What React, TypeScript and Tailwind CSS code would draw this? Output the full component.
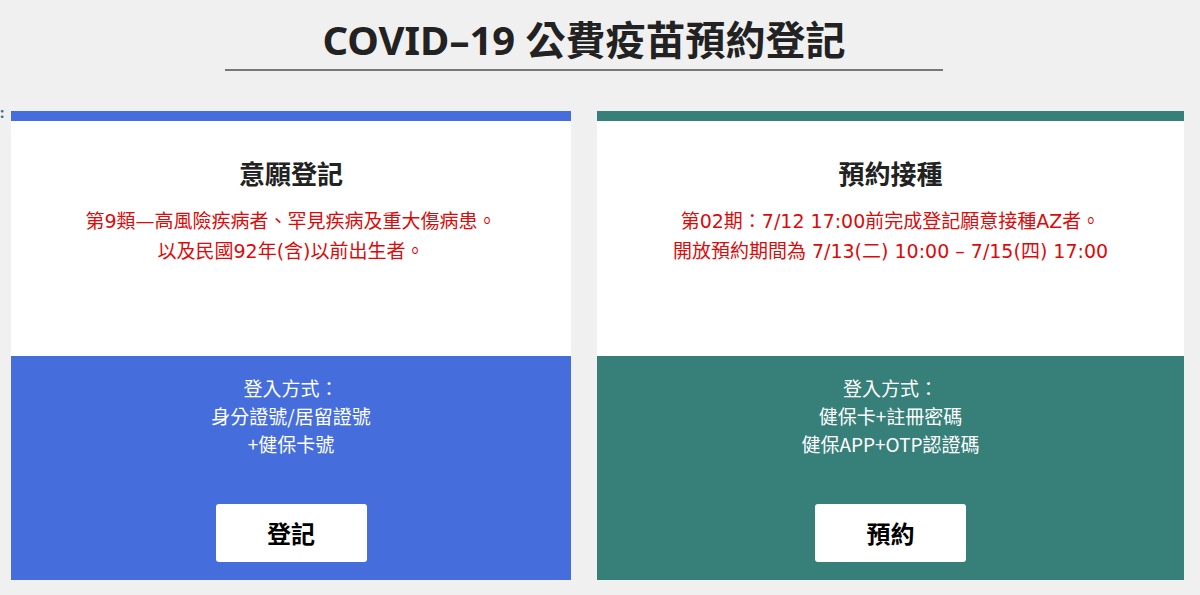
const font = { fontFamily: '"Noto Sans", "Noto Sans CJK TC", sans-serif' };
const cjk = { fontFamily: '"Noto Sans CJK TC", sans-serif' };
const notesFont = { fontFamily: '"DejaVu Sans", "Noto Sans CJK TC", sans-serif' };

interface CardProps {
  title: string;
  notes: string[];
  login: string[];
  action: string;
  color: string;
  width: string;
}

function Card({ title, notes, login, action, color, width }: CardProps) {
  return (
    <div className={`${width} flex flex-col`}>
      <div className={`h-[10px] ${color}`} />
      <div className="h-[235px] bg-white flex flex-col items-center pt-[37px]">
        <h2 className="text-[26px] font-bold leading-[30px] text-[#222]" style={cjk}>
          {title}
        </h2>
        <div className="mt-[18px] text-[19px] leading-[30px] text-[#dd0a0a] text-center" style={notesFont}>
          {notes.map((n) => (
            <div key={n}>{n}</div>
          ))}
        </div>
      </div>
      <div className={`h-[224px] ${color} flex flex-col items-center pt-[18px]`}>
        <div className="text-[19px] leading-[28px] text-white text-center" style={cjk}>
          {login.map((l) => (
            <div key={l}>{l}</div>
          ))}
        </div>
        <button
          type="button"
          className="mt-[46px] w-[151px] h-[58px] bg-white rounded-[3px] text-[24px] font-bold text-black"
          style={cjk}
        >
          {action}
        </button>
      </div>
    </div>
  );
}

export default function App() {
  return (
    <div className="min-h-[595px] w-full bg-[#f0f0f0] relative" style={font}>
      <span className="absolute left-0 top-[101px] text-[15px] font-bold text-[#3a6a9a]">:</span>
      <div className="w-[1168px] flex justify-center pt-[15px]">
        <div className="w-[718px] border-b-2 border-[#777] flex justify-center pb-[4px]">
          <h1 className="text-[40px] font-bold leading-[50px] text-[#222]">COVID–19 公費疫苗預約登記</h1>
        </div>
      </div>
      <div className="flex gap-[26px] pl-[11px] mt-[40px]">
        <Card
          title="意願登記"
          notes={["第9類—高風險疾病者、罕見疾病及重大傷病患。", "以及民國92年(含)以前出生者。"]}
          login={["登入方式：", "身分證號/居留證號", "+健保卡號"]}
          action="登記"
          color="bg-[#456edc]"
          width="w-[560px]"
        />
        <Card
          title="預約接種"
          notes={["第02期：7/12 17:00前完成登記願意接種AZ者。", "開放預約期間為 7/13(二) 10:00 – 7/15(四) 17:00"]}
          login={["登入方式：", "健保卡+註冊密碼", "健保APP+OTP認證碼"]}
          action="預約"
          color="bg-[#37807a]"
          width="w-[587px]"
        />
      </div>
    </div>
  );
}
